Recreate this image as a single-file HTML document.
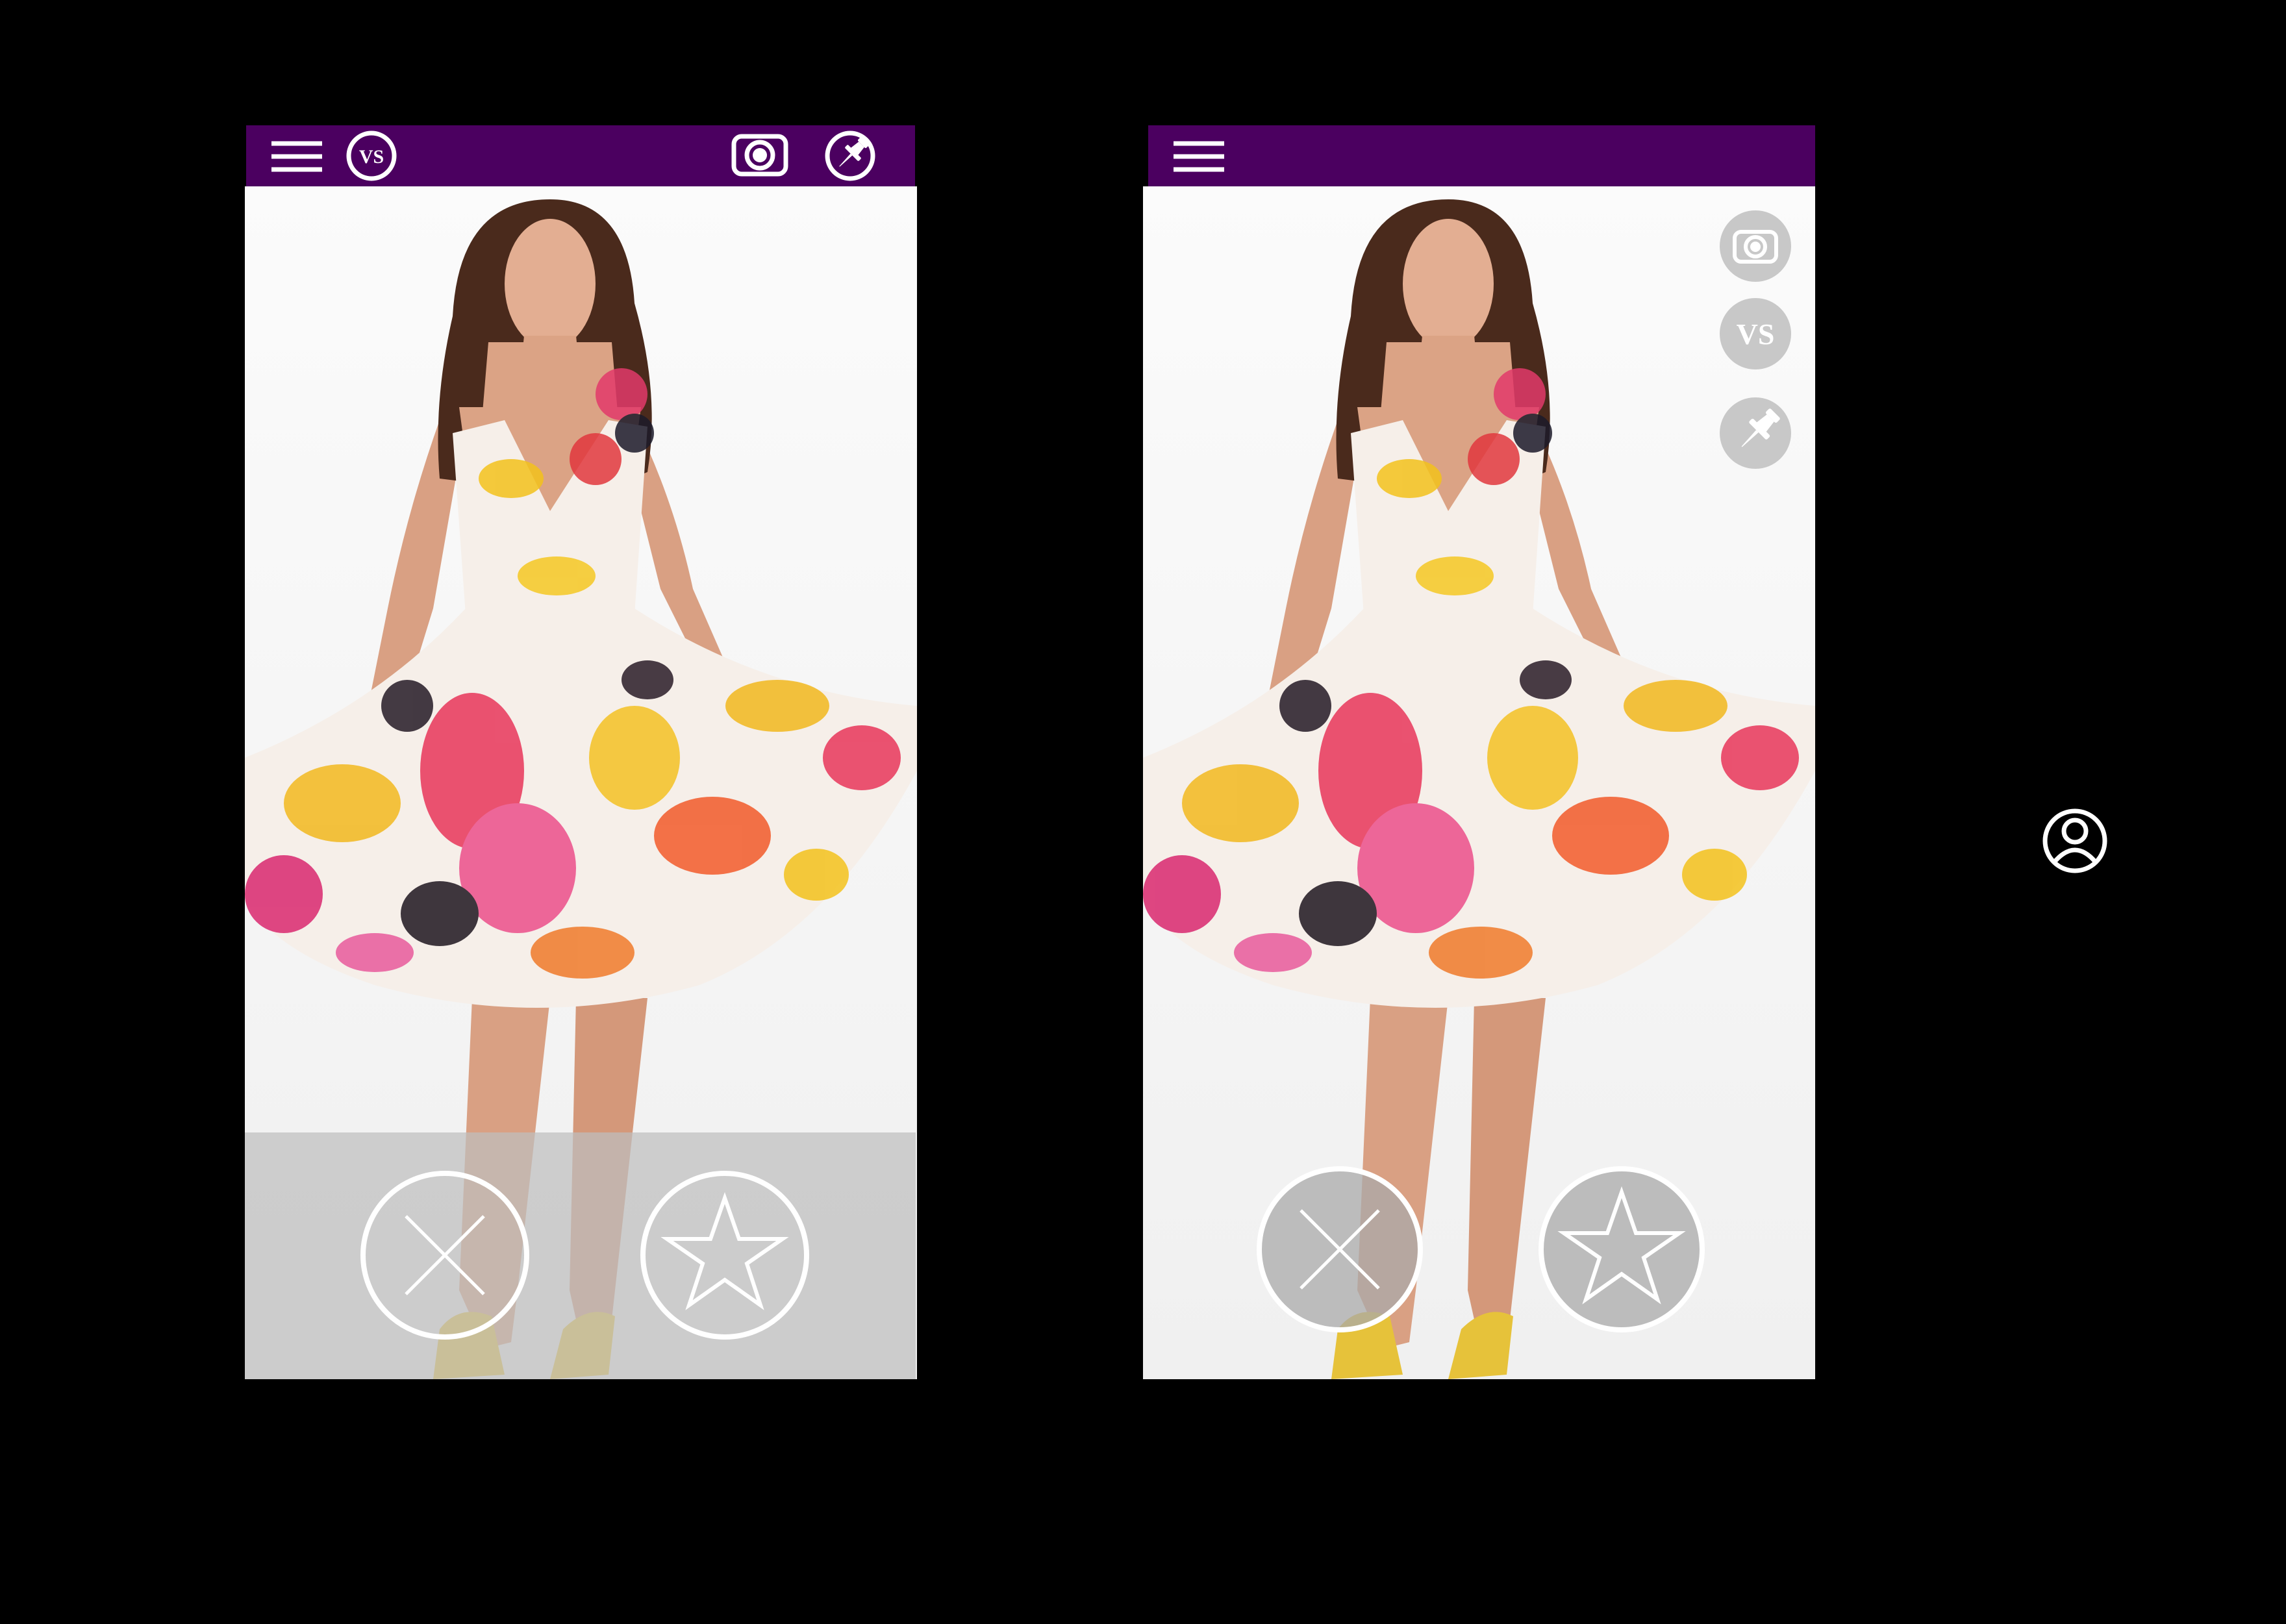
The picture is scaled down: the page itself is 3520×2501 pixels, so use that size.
<!DOCTYPE html>
<html><head><meta charset="utf-8"><style>
html,body{margin:0;padding:0;background:#000;}
body{width:3520px;height:2501px;position:relative;overflow:hidden;font-family:"Liberation Sans",sans-serif;}
.phone{position:absolute;top:287px;width:1035px;height:1837px;overflow:hidden;background:linear-gradient(#fbfbfb,#f0f0f0);}
.hdr{position:absolute;top:193px;height:94px;background:#4b0060;}
.abs{position:absolute;}
</style></head><body>

<div class="hdr" style="left:379px;width:1030px"></div>
<div class="hdr" style="left:1768px;width:1027px"></div>

<svg width="0" height="0" style="position:absolute">
<defs>
<g id="model">
 <path d="M350 1250 L330 1700 L370 1790 L410 1780 L420 1700 L470 1250Z" fill="#d9a083"/>
 <path d="M510 1250 L500 1700 L520 1790 L560 1790 L570 1700 L620 1250Z" fill="#d4987a"/>
 <path d="M300 1760 Q330 1720 380 1740 L400 1830 L290 1837Z" fill="#e6c23a"/>
 <path d="M490 1760 Q530 1720 570 1740 L560 1830 L470 1837Z" fill="#e6c23a"/>
 <path d="M300 360 Q250 500 220 650 L170 900 L210 910 L290 650 L330 420Z" fill="#d9a083"/>
 <path d="M600 360 Q660 480 690 620 L760 780 L730 800 L640 620 L590 420Z" fill="#d9a083"/>
 <path d="M470 20 Q330 20 320 200 Q290 330 300 450 L380 460 L380 250 L560 250 L570 460 L620 440 Q640 320 600 180 Q590 20 470 20Z" fill="#4a2a1c"/>
 <path d="M375 240 L565 240 L575 360 L365 360Z" fill="#dba385"/>
 <ellipse cx="470" cy="150" rx="70" ry="100" fill="#e3ae92"/>
 <path d="M430 230 L510 230 L520 330 L420 330Z" fill="#dba385"/>
 <path d="M330 340 L610 340 L580 560 Q470 600 360 560Z" fill="#dba385"/>
 <path d="M320 380 L400 360 L470 500 L560 360 L620 370 L600 660 L340 660Z" fill="#f6efe9"/>
 <path d="M340 650 L600 650 Q800 780 1035 800 L1035 900 Q900 1150 700 1230 Q450 1300 200 1230 Q50 1180 0 1100 L0 880 Q200 800 340 650Z" fill="#f6efe9"/>
 <g opacity="0.85">
  <ellipse cx="410" cy="450" rx="50" ry="30" fill="#f3c21c"/>
  <ellipse cx="540" cy="420" rx="40" ry="40" fill="#e2383e"/>
  <ellipse cx="580" cy="320" rx="40" ry="40" fill="#e23a6a"/>
  <ellipse cx="600" cy="380" rx="30" ry="30" fill="#1c1a2a"/>
  <ellipse cx="480" cy="600" rx="60" ry="30" fill="#f5c823"/>
  <ellipse cx="150" cy="950" rx="90" ry="60" fill="#f2b81f"/>
  <ellipse cx="60" cy="1090" rx="60" ry="60" fill="#d9286f"/>
  <ellipse cx="350" cy="900" rx="80" ry="120" fill="#e8365a"/>
  <ellipse cx="420" cy="1050" rx="90" ry="100" fill="#ec4f8a"/>
  <ellipse cx="300" cy="1120" rx="60" ry="50" fill="#1e1620"/>
  <ellipse cx="600" cy="880" rx="70" ry="80" fill="#f4c224"/>
  <ellipse cx="720" cy="1000" rx="90" ry="60" fill="#f25a2a"/>
  <ellipse cx="820" cy="800" rx="80" ry="40" fill="#f2b81f"/>
  <ellipse cx="950" cy="880" rx="60" ry="50" fill="#e8365a"/>
  <ellipse cx="520" cy="1180" rx="80" ry="40" fill="#f07a2a"/>
  <ellipse cx="250" cy="800" rx="40" ry="40" fill="#241a26"/>
  <ellipse cx="620" cy="760" rx="40" ry="30" fill="#2a1c28"/>
  <ellipse cx="880" cy="1060" rx="50" ry="40" fill="#f3c21c"/>
  <ellipse cx="200" cy="1180" rx="60" ry="30" fill="#e95a9c"/>
 </g>
</g>
<g id="pin">
 <rect x="-9" y="-30" width="18" height="8" rx="2"/>
 <path d="M-6 -22 H6 L8 -6 H-8Z"/>
 <rect x="-15" y="-7" width="30" height="7" rx="2"/>
 <path d="M-2 0 H2 L0.5 26 H-0.5Z"/>
</g>
</defs>
</svg>

<div class="phone" style="left:377px">
 <svg width="1035" height="1837"><use href="#model"/></svg>
 <div class="abs" style="left:0;top:1457px;width:1033px;height:380px;background:rgba(190,190,190,0.72)"></div>
</div>
<div class="phone" style="left:1760px">
 <svg width="1035" height="1837"><use href="#model"/></svg>
</div>

<svg class="abs" style="left:0;top:0" width="3520" height="2501">
 <g stroke="#fff" stroke-width="7" fill="none">
  <path d="M418 221H496M418 241H496M418 261H496"/>
  <circle cx="572" cy="240" r="35"/>
  <rect x="1130" y="210" width="80" height="58" rx="12"/>
  <circle cx="1170" cy="239" r="20"/>
  <circle cx="1309" cy="240" r="35"/>
  <path d="M1807 221H1885M1807 241H1885M1807 261H1885"/>
 </g>
 <circle cx="1170" cy="239" r="11" fill="#fff"/>
 <text x="572" y="251" font-size="30" font-weight="bold" fill="#fff" text-anchor="middle" font-family="Liberation Serif">VS</text>
 <use href="#pin" fill="#fff" transform="translate(1311 238) rotate(45)"/>
 <g stroke="#fff" stroke-width="8" fill="none">
  <circle cx="685" cy="1933" r="126"/>
  <path d="M625 1873 L745 1993 M745 1873 L625 1993" stroke-width="5"/>
  <circle cx="1116" cy="1933" r="126"/>
  <path d="M1116 1845 L1138 1908 L1205 1908 L1150 1946 L1171 2010 L1116 1971 L1061 2010 L1082 1946 L1027 1908 L1094 1908Z" stroke-width="6"/>
 </g>
 <circle cx="2063" cy="1924" r="124" fill="rgba(170,170,170,0.75)" stroke="#fff" stroke-width="8"/>
 <path d="M2003 1864 L2123 1984 M2123 1864 L2003 1984" stroke="#fff" stroke-width="5"/>
 <circle cx="2497" cy="1924" r="124" fill="rgba(170,170,170,0.75)" stroke="#fff" stroke-width="8"/>
 <path d="M2497 1836 L2519 1899 L2586 1899 L2531 1937 L2552 2001 L2497 1962 L2442 2001 L2463 1937 L2408 1899 L2475 1899Z" stroke="#fff" stroke-width="6" fill="none"/>
 <circle cx="2703" cy="379" r="55" fill="#c8c8c8"/>
 <rect x="2671" y="357" width="64" height="46" rx="10" stroke="#fff" stroke-width="6" fill="none"/>
 <circle cx="2703" cy="380" r="15" stroke="#fff" stroke-width="6" fill="none"/>
 <circle cx="2703" cy="380" r="8" fill="#fff"/>
 <circle cx="2703" cy="514" r="55" fill="#c8c8c8"/>
 <text x="2703" y="530" font-size="46" font-weight="bold" fill="#fff" text-anchor="middle" font-family="Liberation Serif">VS</text>
 <circle cx="2703" cy="667" r="55" fill="#c8c8c8"/>
 <use href="#pin" fill="#fff" transform="translate(2706 664) rotate(45) scale(1.3)"/>
 <circle cx="3195" cy="1295" r="46" stroke="#fff" stroke-width="7" fill="none"/>
 <circle cx="3195" cy="1280" r="17" stroke="#fff" stroke-width="7" fill="none"/>
 <path d="M3163 1328 Q3195 1290 3227 1328" stroke="#fff" stroke-width="7" fill="none"/>
</svg>
</body></html>
